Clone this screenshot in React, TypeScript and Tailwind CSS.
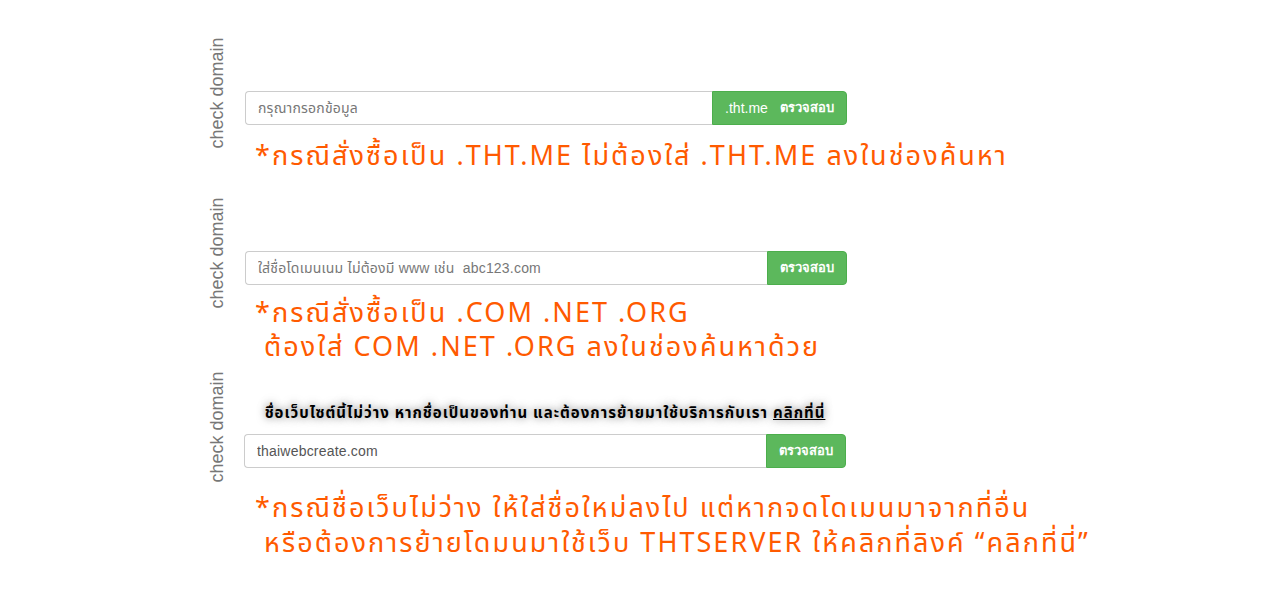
import React from 'react';

const thai = "font-['Noto_Sans_Thai','Noto_Sans_Thai_UI','Kanit','Prompt','Noto_Sans',sans-serif]";

const VerticalLabel = () => (
  <div className="w-[18px] h-[109px] shrink-0 flex items-center justify-center">
    <span className="block rotate-[-90deg] whitespace-nowrap text-[18px] leading-[18px] text-[#777]">
      check domain
    </span>
  </div>
);

type SearchProps = {
  placeholder?: string;
  value?: string;
  suffix?: string;
  buttonWidth: string;
};

const DomainSearch = ({ placeholder, value, suffix, buttonWidth }: SearchProps) => (
  <div className="flex h-[34px] w-[602px]">
    <input
      className="flex-1 min-w-0 h-full rounded-l-[4px] border border-[#ccc] border-r-0 px-3 text-[14px] text-[#555] placeholder:text-[#777] outline-none font-['Liberation_Sans','Noto_Sans_Thai',Tahoma,sans-serif] tracking-[0.2px]"
      placeholder={placeholder}
      defaultValue={value}
    />
    <button
      className={`${buttonWidth} h-full shrink-0 rounded-r-[4px] bg-[#5cb85c] border border-[#4cae4c] text-white text-[13px] flex items-center justify-center gap-[12px]`}
    >
      {suffix && <span className="font-normal text-[14px]">{suffix}</span>}
      <span className="font-bold">ตรวจสอบ</span>
    </button>
  </div>
);

const Note = ({ children, className = '' }: { children: React.ReactNode; className?: string }) => (
  <div className={`${thai} text-[#ff5a00] text-[27px] tracking-[2.05px] leading-[34px] whitespace-pre ${className}`}>
    {children}
  </div>
);

export default function App() {
  return (
    <div className="min-h-screen bg-white font-['Liberation_Sans',Arial,sans-serif]">
      <div className="pl-[208px] pt-[38px]">
        {/* .tht.me */}
        <div className="flex items-start">
          <VerticalLabel />
          <div className="ml-[19px] pt-[53px]">
            <DomainSearch placeholder="กรุณากรอกข้อมูล" suffix=".tht.me" buttonWidth="w-[135px]" />
            <Note className="mt-[15px] pl-[10px]">*กรณีสั่งซื้อเป็น .THT.ME ไม่ต้องใส่ .THT.ME ลงในช่องค้นหา</Note>
          </div>
        </div>

        {/* .com .net .org */}
        <div className="flex items-start mt-[24px]">
          <VerticalLabel />
          <div className="ml-[19px] pt-[53px]">
            <DomainSearch placeholder="ใส่ชื่อโดเมนเนม ไม่ต้องมี www เช่น  abc123.com" buttonWidth="w-[80px]" />
            <Note className="mt-[12px] pl-[10px]">
              {'*กรณีสั่งซื้อเป็น .COM .NET .ORG\n ต้องใส่ COM .NET .ORG ลงในช่องค้นหาด้วย'}
            </Note>
          </div>
        </div>

        {/* not available */}
        <div className="flex items-start mt-[7px]">
          <VerticalLabel />
          <div className="ml-[18px] pt-[32px]">
            <p className={`w-[602px] text-center text-[15px] tracking-[1px] leading-[20px] font-bold text-black [text-shadow:0_0_8px_rgba(0,0,0,0.55)] ${thai}`}>
              ชื่อเว็บไซต์นี้ไม่ว่าง หากชื่อเป็นของท่าน และต้องการย้ายมาใช้บริการกับเรา{' '}
              <a href="#" className="underline">คลิกที่นี่</a>
            </p>
            <div className="mt-[10px]">
              <DomainSearch value="thaiwebcreate.com" buttonWidth="w-[80px]" />
            </div>
            <Note className="mt-[23px] pl-[11px] leading-[35px]">
              {'*กรณีชื่อเว็บไม่ว่าง ให้ใส่ชื่อใหม่ลงไป แต่หากจดโดเมนมาจากที่อื่น\n หรือต้องการย้ายโดมนมาใช้เว็บ THTSERVER ให้คลิกที่ลิงค์ “คลิกที่นี่”'}
            </Note>
          </div>
        </div>
      </div>
    </div>
  );
}
